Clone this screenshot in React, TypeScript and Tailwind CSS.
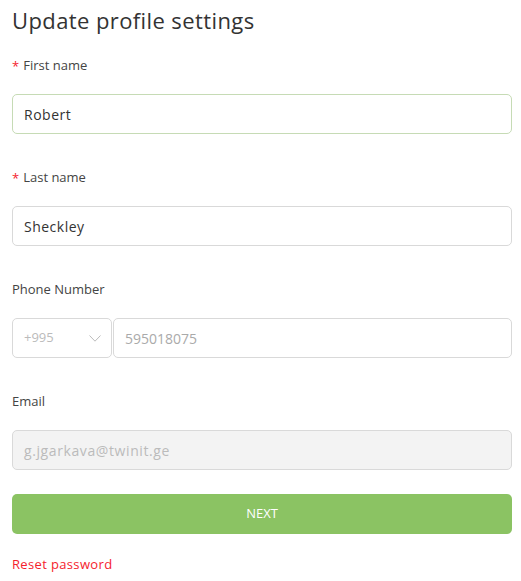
import React from "react";

const font = { fontFamily: '"Open Sans", "DejaVu Sans", sans-serif' };

function Label({ text, required }: { text: string; required?: boolean }) {
  return (
    <div className="flex items-center h-5 text-[13px] text-[#444] mb-[18px]">
      {required && <span className="text-[#f5222d] text-[13px] mr-[4px] leading-none">*</span>}
      <span>{text}</span>
    </div>
  );
}

export default function App() {
  return (
    <div className="w-[521px] h-[581px] bg-white pl-3 pr-[9px] pt-[6px]" style={font}>
      <h1 className="text-[22px] leading-7 text-[#333] mb-[22px] tracking-[0.4px]">Update profile settings</h1>

      <div className="mb-[34px]">
        <Label text="First name" required />
        <div className="h-10 rounded-[5px] border border-[#c6dbb5] flex items-center pl-[11px] text-[14px] text-[#333] tracking-[0.5px]">Robert</div>
      </div>

      <div className="mb-[34px]">
        <Label text="Last name" required />
        <div className="h-10 rounded-[5px] border border-[#d9d9d9] flex items-center pl-[11px] text-[14px] text-[#333] tracking-[0.5px]">Sheckley</div>
      </div>

      <div className="mb-[34px]">
        <Label text="Phone Number" />
        <div className="flex gap-px">
          <div className="w-[100px] h-10 rounded-[5px] border border-[#d9d9d9] flex items-center justify-between pl-[11px] pr-[10px] text-[13px] text-[#bbb]">
            <span>+995</span>
            <svg width="12" height="7" viewBox="0 0 12 7" fill="none"><path d="M0.5 0.5L6 6.2L11.5 0.5" stroke="#bbb" strokeWidth="1" /></svg>
          </div>
          <div className="flex-1 h-10 rounded-[5px] border border-[#d9d9d9] flex items-center pl-[11px] text-[14px] text-[#aaa]">595018075</div>
        </div>
      </div>

      <div className="mb-6">
        <Label text="Email" />
        <div className="h-10 rounded-[5px] border border-[#d9d9d9] bg-[#f3f3f3] flex items-center pl-[11px] text-[14px] text-[#bbb] tracking-[0.6px]">g.jgarkava@twinit.ge</div>
      </div>

      <button className="w-full h-10 rounded-[5px] bg-[#8bc363] text-white text-[13px] mb-5">NEXT</button>

      <div className="text-[13px] text-[#f5222d] leading-5 tracking-[0.35px]">Reset password</div>
    </div>
  );
}
